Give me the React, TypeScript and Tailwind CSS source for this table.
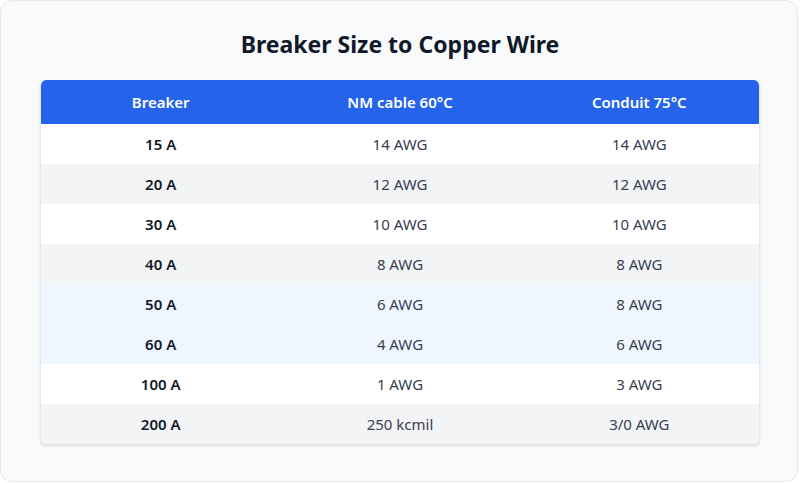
const rows = [
  { breaker: "15 A", nm: "14 AWG", conduit: "14 AWG" },
  { breaker: "20 A", nm: "12 AWG", conduit: "12 AWG" },
  { breaker: "30 A", nm: "10 AWG", conduit: "10 AWG" },
  { breaker: "40 A", nm: "8 AWG", conduit: "8 AWG" },
  { breaker: "50 A", nm: "6 AWG", conduit: "8 AWG", highlight: true },
  { breaker: "60 A", nm: "4 AWG", conduit: "6 AWG", highlight: true },
  { breaker: "100 A", nm: "1 AWG", conduit: "3 AWG" },
  { breaker: "200 A", nm: "250 kcmil", conduit: "3/0 AWG" },
];

export default function App() {
  return (
    <div className="w-[800px] h-[484px] bg-white font-['Noto_Sans',sans-serif]">
      <div className="w-[798px] h-[482px] rounded-xl border border-[#e5e7eb] bg-[#f8fafc] pl-[39px] pr-[37px]">
        <h1 className="pt-[27px] pb-[20px] text-center text-[23px] font-bold leading-[32px] text-[#111827]">
          Breaker Size to Copper Wire
        </h1>
        <div className="overflow-hidden rounded-md border border-t-0 border-[#e5e7eb] bg-white shadow-sm">
          <div className="grid h-[44px] grid-cols-3 items-center bg-[#2563eb] text-[15px] font-semibold text-white">
            <div className="text-center">Breaker</div>
            <div className="text-center">NM cable 60°C</div>
            <div className="text-center">Conduit 75°C</div>
          </div>
          {rows.map((r, i) => (
            <div
              key={r.breaker}
              className={
                "grid h-[40px] grid-cols-3 items-center text-[15px] " +
                (r.highlight ? "bg-[#eff6ff]" : i % 2 === 1 ? "bg-[#f3f4f6]" : "bg-white")
              }
            >
              <div className="text-center font-semibold text-[#111827]">{r.breaker}</div>
              <div className="text-center text-[#374151]">{r.nm}</div>
              <div className="text-center text-[#374151]">{r.conduit}</div>
            </div>
          ))}
        </div>
      </div>
    </div>
  );
}
